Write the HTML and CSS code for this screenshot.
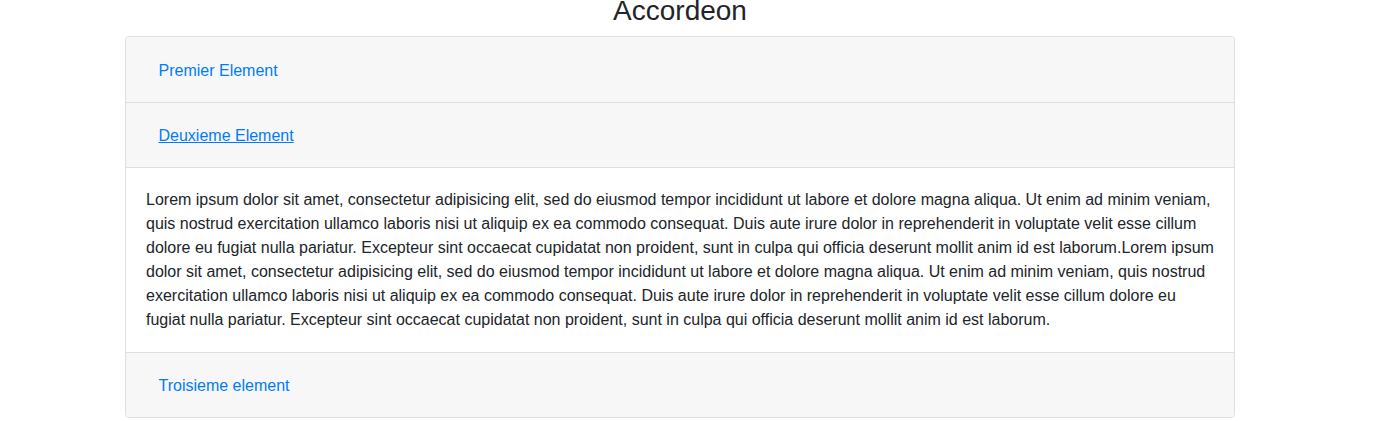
FILE: index.html
```html
<!DOCTYPE html>
<html lang="fr">
<head>
<meta charset="utf-8">
<title>Accordeon</title>
<link rel="stylesheet" href="styles.css">
</head>
<body>
<div class="page">
  <h3 class="title">Accordeon</h3>
  <div class="accordion">
    <div class="card-header first"><a class="btn-link" href="#">Premier Element</a></div>
    <div class="card-header"><a class="btn-link active" href="#">Deuxieme Element</a></div>
    <div class="card-body">Lorem ipsum dolor sit amet, consectetur adipisicing elit, sed do eiusmod tempor incididunt ut labore et dolore magna aliqua. Ut enim ad minim veniam, quis nostrud exercitation ullamco laboris nisi ut aliquip ex ea commodo consequat. Duis aute irure dolor in reprehenderit in voluptate velit esse cillum dolore eu fugiat nulla pariatur. Excepteur sint occaecat cupidatat non proident, sunt in culpa qui officia deserunt mollit anim id est laborum.Lorem ipsum dolor sit amet, consectetur adipisicing elit, sed do eiusmod tempor incididunt ut labore et dolore magna aliqua. Ut enim ad minim veniam, quis nostrud exercitation ullamco laboris nisi ut aliquip ex ea commodo consequat. Duis aute irure dolor in reprehenderit in voluptate velit esse cillum dolore eu fugiat nulla pariatur. Excepteur sint occaecat cupidatat non proident, sunt in culpa qui officia deserunt mollit anim id est laborum.</div>
    <div class="card-header last"><a class="btn-link" href="#">Troisieme element</a></div>
  </div>
</div>
</body>
</html>
```
FILE: styles.css
```css
html, body {
  margin: 0;
  padding: 0;
  background: #fff;
}
body {
  font-family: "Liberation Sans", Arial, sans-serif;
  font-size: 16px;
  line-height: 1.5;
  color: #212529;
}
.page {
  width: 1360px;
}
.title {
  margin: 0 0 14px 0;
  font-size: 28px;
  font-weight: 500;
  line-height: 22px;
  text-align: center;
  color: #212529;
}
.accordion {
  width: 1108px;
  margin: 0 auto;
  border: 1px solid #dfdfdf;
  border-radius: 4px;
  overflow: hidden;
}
.card-header {
  height: 64px;
  padding: 0 32.5px;
  display: flex;
  align-items: center;
  background: #f7f7f7;
  border-bottom: 1px solid #dfdfdf;
}
.card-header.first {
  height: 65px;
}
.card-header.last {
  border-bottom: 0;
}
.btn-link {
  padding-top: 2px;
  color: #007bff;
  text-decoration: none;
  font-size: 16px;
  line-height: 24px;
}
.btn-link.active {
  text-decoration: underline;
}
.card-body {
  padding: 19.5px 20px 20.5px;
  line-height: 24px;
  background: #fff;
  border-bottom: 1px solid #dfdfdf;
}
```
